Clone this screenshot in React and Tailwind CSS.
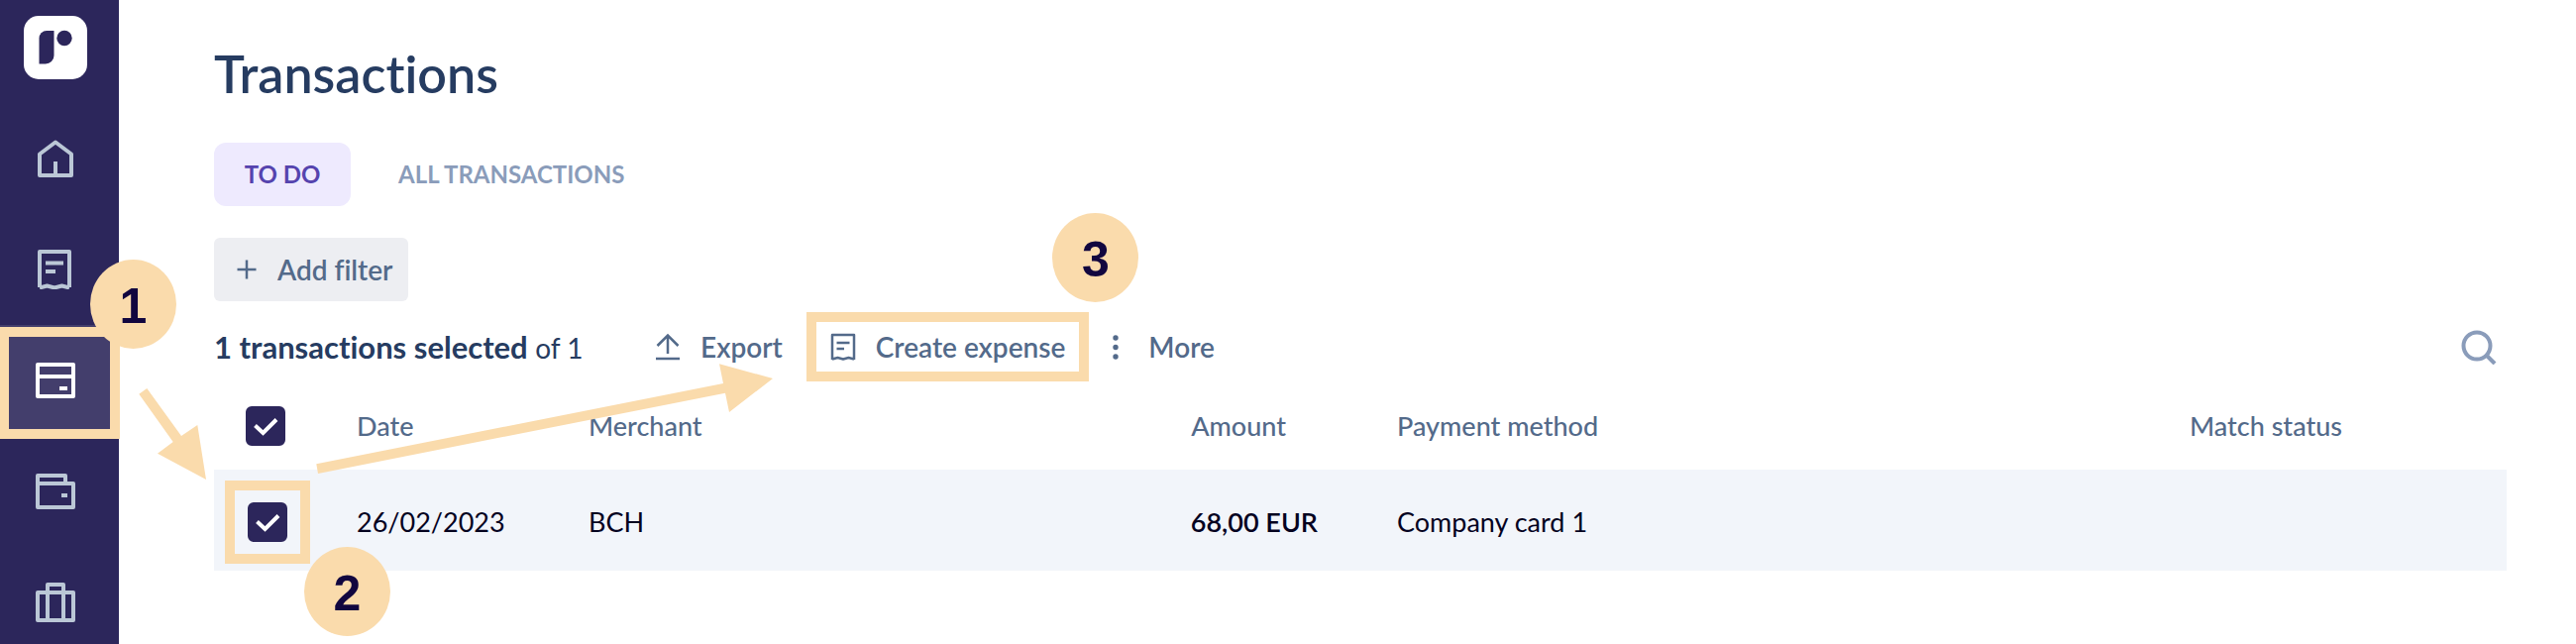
function Icon({ width, height, strokeWidth = 4, children }) {
  return (
    <svg
      width={width}
      height={height}
      viewBox={`0 0 ${width} ${height}`}
      fill="none"
      stroke="currentColor"
      strokeWidth={strokeWidth}
      strokeLinejoin="round"
      aria-hidden="true"
    >
      {children}
    </svg>
  )
}

const navItems = [
  {
    label: 'Home',
    icon: (
      <Icon width={40} height={40}>
        <path d="M4 15.5 20 3.5 36 15.5V37H4ZM20 37V23" />
      </Icon>
    ),
  },
  {
    label: 'Expenses',
    icon: (
      <Icon width={40} height={40}>
        <path d="M4 38V2H34V38" />
        <path d="M4 38.5 11.5 36.5 19 38.5 26.5 36.5 34 38.5" />
        <path d="M10 13.5H28M10 22H20" />
      </Icon>
    ),
  },
  {
    label: 'Transactions',
    active: true,
    icon: (
      <Icon width={40} height={36}>
        <path d="M2 2H38V34H2ZM2 14H38M24 26H32" />
      </Icon>
    ),
  },
  {
    label: 'Wallet',
    icon: (
      <Icon width={40} height={36}>
        <path d="M2 10H38V34H2V2H30V10M26 22H32" />
      </Icon>
    ),
  },
  {
    label: 'Trips',
    icon: (
      <Icon width={40} height={40}>
        <path d="M2 10H38V38H2ZM12 38V2H28V38" />
      </Icon>
    ),
  },
]

function Step({ number, className }) {
  return (
    <span
      className={`absolute z-20 flex h-[90px] w-[87px] items-center justify-center rounded-[50%] bg-[#fadbac] pt-1 font-['Liberation_Sans',sans-serif] text-[50px] leading-none font-bold text-[#11063f] ${className}`}
    >
      {number}
    </span>
  )
}

function Checkbox({ label, className = '' }) {
  return (
    <label className={`grid size-10 ${className}`}>
      <input
        type="checkbox"
        defaultChecked
        aria-label={label}
        className="peer col-start-1 row-start-1 size-10 appearance-none rounded-md border-2 border-[#2c265b] checked:bg-[#2c265b]"
      />
      <svg
        viewBox="0 0 40 40"
        className="pointer-events-none invisible z-10 col-start-1 row-start-1 size-10 peer-checked:visible"
        fill="none"
        stroke="white"
        strokeWidth="4"
        aria-hidden="true"
      >
        <path d="M9.5 19.5 17.5 27 31 13.5" />
      </svg>
    </label>
  )
}

function Sidebar() {
  return (
    <aside className="relative w-[120px] shrink-0 bg-[#2c265b]">
      <a href="#" aria-label="Dashboard" className="mt-4 ml-6 block size-16">
        <svg viewBox="0 0 64 64" className="size-16" aria-hidden="true">
          <rect width="64" height="64" rx="15" fill="white" />
          <path d="M23 15H30.5V40A8.500 8.500 0 0 1 22 48.5H15.5V22.5A7.500 7.500 0 0 1 23 15Z" fill="#2c265b" />
          <circle cx="41" cy="22.5" r="7.7" fill="#2c265b" />
        </svg>
      </a>
      <nav className="mt-6">
        {navItems.map((item) => (
          <div key={item.label} className="relative">
            <a
              href="#"
              aria-label={item.label}
              className={`flex h-28 items-center justify-center pr-2 ${
                item.active ? 'bg-[#433e6c] text-white' : 'text-[#bbc7d6]'
              }`}
            >
              {item.icon}
            </a>
            {item.active && (
              <>
                <span className="pointer-events-none absolute top-0.5 -right-px -bottom-[3px] -left-px z-10 border-[10px] border-[#fadbac]" />
                <Step number={1} className="-top-[66px] left-[91px]" />
              </>
            )}
          </div>
        ))}
      </nav>
    </aside>
  )
}

function Toolbar() {
  return (
    <div className="mt-3 flex h-[68px] items-center text-[28px] font-semibold text-[#536a8a]">
      <p className="w-[445px] text-[31px] font-bold text-[#263c61]">
        1 transactions selected <span className="text-[28px] font-normal">of 1</span>
      </p>
      <button type="button" className="flex items-center gap-5">
        <Icon width={26} height={28} strokeWidth={2.5}>
          <path d="M13 21V3M2.5 13 13 2.5 23.5 13M1 26H25" strokeLinejoin="miter" />
        </Icon>
        Export
      </button>
      <div className="relative ml-12">
        <button type="button" className="flex items-center gap-5">
          <Icon width={26} height={28} strokeWidth={2.5}>
            <path d="M2 27V2H24V27M2 26.5 7.5 25 13 26.5 18.5 25 24 26.5M6.5 10H19.5M6.5 16H14" />
          </Icon>
          Create expense
        </button>
        <span className="pointer-events-none absolute -inset-x-6 top-1/2 z-10 h-[70px] -translate-y-1/2 border-[10px] border-[#fadbac]" />
        <Step number={3} className="-top-[114px] right-[-74px]" />
      </div>
      <button type="button" className="ml-12 flex items-center gap-[30px]">
        <svg width="6" height="28" viewBox="0 0 6 28" fill="currentColor" aria-hidden="true">
          <circle cx="3" cy="5" r="2.700" />
          <circle cx="3" cy="14.5" r="2.700" />
          <circle cx="3" cy="24" r="2.700" />
        </svg>
        More
      </button>
      <button type="button" aria-label="Search" className="mr-2.5 ml-auto text-[#8a9cba]">
        <Icon width={36} height={36}>
          <circle cx="16" cy="17" r="13.5" />
          <path d="M25.5 26.5 34 35" />
        </Icon>
      </button>
    </div>
  )
}

function TransactionsTable() {
  return (
    <table className="w-full table-fixed text-left text-[27px]">
      <colgroup>
        <col className="w-36" />
        <col className="w-[234px]" />
        <col className="w-[500px]" />
        <col className="w-[316px]" />
        <col className="w-[800px]" />
        <col />
      </colgroup>
      <thead>
        <tr className="h-[90px] text-[#536a8a] *:pt-0.5 *:font-medium">
          <th>
            <Checkbox label="Select all transactions" className="ml-8" />
          </th>
          <th>Date</th>
          <th>Merchant</th>
          <th className="pr-28 text-right">Amount</th>
          <th>Payment method</th>
          <th>Match status</th>
        </tr>
      </thead>
      <tbody>
        <tr className="h-[102px] bg-[#f2f5fa] text-[#05021f] *:pt-1">
          <td>
            <div className="relative ml-[34px] size-10">
              <Checkbox label="Select transaction" />
              <span className="pointer-events-none absolute -inset-x-[23px] -inset-y-[22px] z-10 border-[10px] border-[#fadbac]" />
              <Step number={2} className="top-[45px] left-[57px]" />
            </div>
          </td>
          <td>26/02/2023</td>
          <td>BCH</td>
          <td className="pr-20 text-right font-semibold">68,00 EUR</td>
          <td>Company card 1</td>
          <td />
        </tr>
      </tbody>
    </table>
  )
}

export default function App() {
  return (
    <div className="relative flex min-h-screen overflow-hidden bg-white font-['Lato','Noto_Sans',sans-serif] [font-variant-ligatures:none]">
      <Sidebar />
      <main className="min-w-0 flex-1 pt-11 pr-[70px] pl-24">
        <h1 className="text-[52px] leading-[60px] font-semibold text-[#263c61]">Transactions</h1>
        <div className="mt-10 flex gap-4 text-2xl font-bold">
          <button type="button" className="h-16 w-[138px] rounded-xl bg-[#eeeafe] text-[#5543ae]">
            TO DO
          </button>
          <button type="button" className="h-16 px-8 text-[#8a9cba]">
            ALL TRANSACTIONS
          </button>
        </div>
        <button
          type="button"
          className="mt-8 flex h-16 items-center gap-5 rounded-md bg-[#edeef2] pr-4 pl-[22px] text-[28px] font-semibold text-[#536a8a]"
        >
          <Icon width={22} height={22} strokeWidth={2.5}>
            <path d="M11 1.5V20.5M1.5 11H20.5" />
          </Icon>
          Add filter
        </button>
        <Toolbar />
        <TransactionsTable />
      </main>

      {/* arrows between the numbered steps */}
      <svg
        width="800"
        height="500"
        viewBox="0 0 800 500"
        className="pointer-events-none absolute top-0 left-0 z-10"
        fill="#fadbac"
        aria-hidden="true"
      >
        <path d="M140.3 397.7 148.3 392 183 440 199.3 429 208 484 159 457.7 174.7 446Z" />
        <path d="M319.3 468.3 730 387 726 367.3 780 382 736 416 732 396.7 321 478Z" />
      </svg>
    </div>
  )
}
